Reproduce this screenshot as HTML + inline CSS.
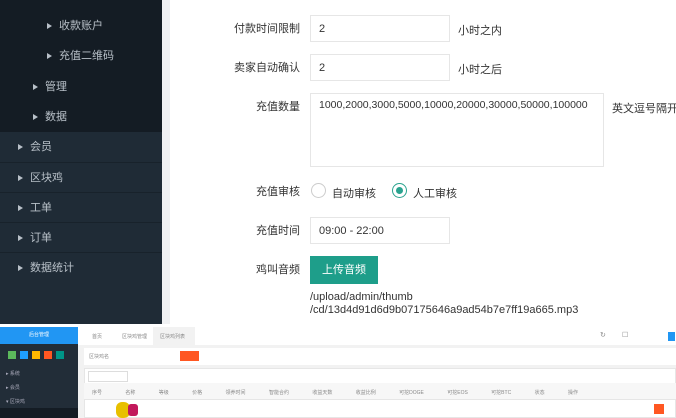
<!DOCTYPE html><html><head><meta charset="utf-8"><style>
*{margin:0;padding:0;box-sizing:border-box}
body{width:676px;height:418px;overflow:hidden;background:#fff;font-family:"Liberation Sans","Noto Sans CJK SC",sans-serif;position:relative;font-size:11px;color:#333}
.a{position:absolute}
.sb{left:0;top:0;width:162px;height:324px;background:#1f2b36}
.sub{left:0;top:0;width:162px;height:132px;background:#141c24}
.it{position:absolute;color:#b8c0c8;font-size:11px;height:30px;line-height:30px;width:162px}
.it:before{content:"";display:inline-block;border-left:5px solid #b8c0c8;border-top:3.5px solid transparent;border-bottom:3.5px solid transparent;margin-right:7px;vertical-align:0}
.ln{border-top:1px solid #18222b}
.lb{position:absolute;right:376px;font-size:11px;color:#333;text-align:right;line-height:14px}
.in{position:absolute;left:310px;border:1px solid #e6e6e6;background:#fff;height:27px;display:flex;align-items:center;padding-left:8px;font-size:11px}
.t{position:absolute;font-size:5px;color:#888}
</style></head><body>
<div class="a sb"></div><div class="a sub"></div>
<div class="a" style="left:162px;top:0;width:8px;height:324px;background:#f0f1f3"></div>
<div class="it" style="top:11px;left:47px">收款账户</div>
<div class="it" style="top:41px;left:47px">充值二维码</div>
<div class="it" style="top:72px;left:33px">管理</div>
<div class="it" style="top:102px;left:33px">数据</div>
<div class="it" style="top:132px;left:0;padding-left:18px">会员</div>
<div class="it ln" style="top:162px;left:0;padding-left:18px">区块鸡</div>
<div class="it ln" style="top:192px;left:0;padding-left:18px">工单</div>
<div class="it ln" style="top:222px;left:0;padding-left:18px">订单</div>
<div class="it ln" style="top:252px;left:0;padding-left:18px">数据统计</div>

<div class="lb" style="top:22px">付款时间限制</div>
<div class="in" style="top:15px;width:140px">2</div>
<div class="a" style="left:458px;top:22px">小时之内</div>
<div class="lb" style="top:61px">卖家自动确认</div>
<div class="in" style="top:54px;width:140px">2</div>
<div class="a" style="left:458px;top:61px">小时之后</div>
<div class="lb" style="top:100px">充值数量</div>
<div class="in" style="top:93px;width:294px;height:74px;align-items:flex-start;padding-top:5px;font-size:10.5px">1000,2000,3000,5000,10000,20000,30000,50000,100000</div>
<div class="a" style="left:612px;top:100px;white-space:nowrap">英文逗号隔开</div>
<div class="lb" style="top:185px">充值审核</div>
<div class="a" style="left:311px;top:183px;width:15px;height:15px;border:1px solid #ccc;border-radius:50%"></div>
<div class="a" style="left:332px;top:185px">自动审核</div>
<div class="a" style="left:392px;top:183px;width:15px;height:15px;border:1px solid #2aa38f;border-radius:50%"><div style="margin:3px;width:7px;height:7px;border-radius:50%;background:#2aa38f"></div></div>
<div class="a" style="left:413px;top:185px">人工审核</div>
<div class="lb" style="top:224px">充值时间</div>
<div class="in" style="top:217px;width:140px">09:00 - 22:00</div>
<div class="lb" style="top:263px">鸡叫音频</div>
<div class="a" style="left:310px;top:256px;width:68px;height:28px;background:#1e9e8a;color:#fff;line-height:28px;text-align:center">上传音频</div>
<div class="a" style="left:310px;top:291px;line-height:13px">/upload/admin/thumb<br>/cd/13d4d91d6d9b07175646a9ad54b7e7ff19a665.mp3</div>

<div class="a" style="left:0;top:327px;width:676px;height:91px;background:#f2f2f2"></div>
<div class="a" style="left:0;top:327px;width:78px;height:17px;background:#2196f3;color:#fff;font-size:5px;text-align:center;line-height:17px">后台管理</div>
<div class="a" style="left:0;top:344px;width:78px;height:74px;background:#222d38"></div>
<div class="a" style="left:8px;top:351px;width:8px;height:8px;background:#5cb85c"></div>
<div class="a" style="left:20px;top:351px;width:8px;height:8px;background:#1e9fff"></div>
<div class="a" style="left:32px;top:351px;width:8px;height:8px;background:#ffb800"></div>
<div class="a" style="left:44px;top:351px;width:8px;height:8px;background:#ff5722"></div>
<div class="a" style="left:56px;top:351px;width:8px;height:8px;background:#009688"></div>
<div class="t" style="left:6px;top:370px;color:#aab">▸ 系统</div>
<div class="t" style="left:6px;top:384px;color:#aab">▸ 会员</div>
<div class="t" style="left:6px;top:398px;color:#aab">▾ 区块鸡</div>
<div class="a" style="left:0;top:408px;width:78px;height:10px;background:#141c24"></div>
<div class="a" style="left:78px;top:327px;width:598px;height:18px;background:#fff"></div>
<div class="a" style="left:153px;top:327px;width:42px;height:18px;background:#f2f2f2"></div>
<div class="t" style="left:92px;top:333px">首页</div>
<div class="t" style="left:122px;top:333px">区块鸡管理</div>
<div class="t" style="left:160px;top:333px">区块鸡列表</div>
<div class="t" style="left:600px;top:331px;font-size:7px">↻</div>
<div class="t" style="left:622px;top:331px;font-size:7px">☐</div>
<div class="a" style="left:668px;top:332px;width:7px;height:9px;background:#2196f3"></div>
<div class="a" style="left:84px;top:348px;width:592px;height:17px;background:#fff"></div>
<div class="t" style="left:89px;top:353px">区块鸡名</div>
<div class="a" style="left:180px;top:351px;width:19px;height:10px;background:#ff5722"></div>
<div class="a" style="left:84px;top:368px;width:592px;height:50px;background:#fff;border:1px solid #e6e6e6"></div>
<div class="a" style="left:88px;top:371px;width:40px;height:11px;border:1px solid #ddd"></div>
<div class="a" style="left:84px;top:383px;width:592px;height:17px;background:#f7f7f7;border-bottom:1px solid #e6e6e6"></div>
<div class="t" style="left:92px;top:389px;word-spacing:22px">序号 名称 等级 价格 领养时间 智能合约 收益天数 收益比例 可挖DOGE 可挖EOS 可挖BTC 状态 操作</div>
<div class="a" style="left:116px;top:402px;width:14px;height:16px;background:#e8c000;border-radius:6px"></div>
<div class="a" style="left:128px;top:404px;width:10px;height:12px;background:#c2185b;border-radius:3px"></div>
<div class="a" style="left:654px;top:404px;width:10px;height:10px;background:#ff5722"></div>
</body></html>
